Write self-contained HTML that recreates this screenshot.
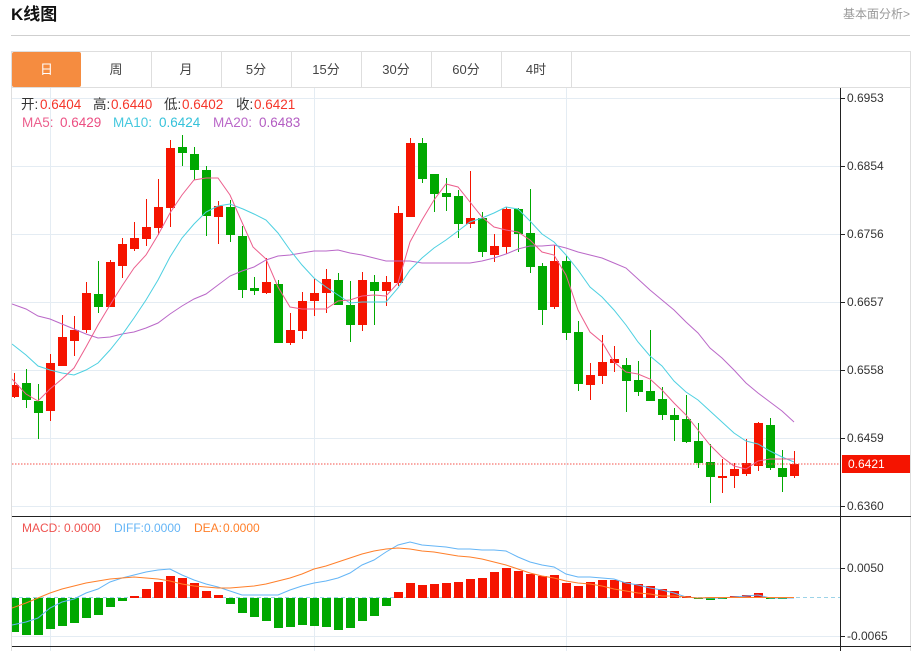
<!DOCTYPE html>
<html lang="zh">
<head>
<meta charset="utf-8">
<title>K线图</title>
<style>
html,body{margin:0;padding:0;background:#fff;width:914px;height:651px;overflow:hidden}
svg{display:block}
text{font-family:"Liberation Sans","Noto Sans CJK SC",sans-serif}
.tab{font-size:13px;fill:#444;text-anchor:middle}
.ax{font-size:12px;fill:#333}
.lg{font-size:13.5px}
.md{font-size:12px}
</style>
</head>
<body>
<svg width="914" height="651" viewBox="0 0 914 651" xmlns="http://www.w3.org/2000/svg">
<defs><clipPath id="c"><rect x="12" y="88" width="828" height="563"/></clipPath></defs>

<!-- header -->
<text x="11" y="20" font-size="17" font-weight="700" fill="#111">K线图</text>
<text x="843" y="18" font-size="12" fill="#999">基本面分析&gt;</text>
<rect x="11" y="35" width="899" height="1" fill="#cfcfcf"/>

<!-- frame -->
<g fill="#dedede" shape-rendering="crispEdges">
<rect x="11" y="51" width="900" height="1"/>
<rect x="11" y="87" width="900" height="1"/>
<rect x="11" y="51" width="1" height="600"/>
<rect x="910" y="51" width="1" height="600"/>
<rect x="151" y="52" width="1" height="35"/>
<rect x="221" y="52" width="1" height="35"/>
<rect x="291" y="52" width="1" height="35"/>
<rect x="361" y="52" width="1" height="35"/>
<rect x="431" y="52" width="1" height="35"/>
<rect x="501" y="52" width="1" height="35"/>
<rect x="571" y="52" width="1" height="35"/>
</g>
<rect x="12" y="52" width="69" height="35" rx="2" fill="#f58c40"/>
<text x="46.5" y="74" font-size="13" fill="#fff" text-anchor="middle">日</text>
<text class="tab" x="116" y="74">周</text>
<text class="tab" x="186" y="74">月</text>
<text class="tab" x="256" y="74">5分</text>
<text class="tab" x="326" y="74">15分</text>
<text class="tab" x="396" y="74">30分</text>
<text class="tab" x="466" y="74">60分</text>
<text class="tab" x="536" y="74">4时</text>

<!-- grid -->
<g fill="#e4ecf3" shape-rendering="crispEdges">
<rect x="12" y="98" width="828" height="1"/>
<rect x="12" y="166" width="828" height="1"/>
<rect x="12" y="234" width="828" height="1"/>
<rect x="12" y="302" width="828" height="1"/>
<rect x="12" y="370" width="828" height="1"/>
<rect x="12" y="438" width="828" height="1"/>
<rect x="12" y="506" width="828" height="1"/>
<rect x="12" y="568" width="828" height="1"/>
<rect x="12" y="636" width="828" height="1"/>
<rect x="50" y="88" width="1" height="563"/>
<rect x="314" y="88" width="1" height="563"/>
<rect x="566" y="88" width="1" height="563"/>
</g>

<g clip-path="url(#c)">
<!-- red candles -->
<path shape-rendering="crispEdges" fill="#f51400" d="M14 373h1v25h-1zM10 385h9v12h-9zM50 354h1v67h-1zM46 363h9v48h-9zM62 315h1v51h-1zM58 337h9v29h-9zM74 316h1v40h-1zM70 330h9v11h-9zM86 282h1v51h-1zM82 293h9v37h-9zM110 260h1v47h-1zM106 262h9v45h-9zM122 238h1v40h-1zM118 244h9v22h-9zM134 222h1v29h-1zM130 238h9v11h-9zM146 199h1v47h-1zM142 227h9v12h-9zM158 179h1v56h-1zM154 207h9v21h-9zM170 140h1v87h-1zM166 148h9v60h-9zM218 201h1v43h-1zM214 206h9v11h-9zM266 258h1v36h-1zM262 282h9v11h-9zM290 313h1v32h-1zM286 330h9v13h-9zM302 292h1v47h-1zM298 301h9v30h-9zM314 279h1v37h-1zM310 293h9v8h-9zM326 269h1v44h-1zM322 279h9v14h-9zM362 272h1v59h-1zM358 280h9v45h-9zM386 276h1v30h-1zM382 282h9v9h-9zM398 206h1v80h-1zM394 213h9v70h-9zM410 138h1v79h-1zM406 143h9v74h-9zM470 171h1v57h-1zM466 218h9v6h-9zM494 234h1v28h-1zM490 246h9v9h-9zM506 207h1v47h-1zM502 209h9v38h-9zM554 245h1v64h-1zM550 261h9v46h-9zM590 363h1v37h-1zM586 375h9v10h-9zM602 335h1v49h-1zM598 362h9v14h-9zM614 346h1v26h-1zM610 359h9v4h-9zM722 459h1v34h-1zM718 476h9v2h-9zM734 463h1v25h-1zM730 469h9v7h-9zM746 439h1v37h-1zM742 463h9v11h-9zM758 422h1v49h-1zM754 423h9v43h-9zM794 451h1v27h-1zM790 464h9v12h-9z"/>
<!-- green candles -->
<path shape-rendering="crispEdges" fill="#00a800" d="M26 369h1v39h-1zM22 383h9v17h-9zM38 384h1v55h-1zM34 401h9v12h-9zM98 261h1v52h-1zM94 294h9v13h-9zM182 135h1v31h-1zM178 147h9v6h-9zM194 147h1v33h-1zM190 154h9v16h-9zM206 166h1v70h-1zM202 170h9v46h-9zM230 200h1v42h-1zM226 207h9v28h-9zM242 226h1v72h-1zM238 236h9v54h-9zM254 277h1v18h-1zM250 288h9v3h-9zM278 280h1v63h-1zM274 284h9v59h-9zM338 273h1v32h-1zM334 280h9v25h-9zM350 281h1v61h-1zM346 305h9v20h-9zM374 275h1v50h-1zM370 282h9v9h-9zM422 138h1v45h-1zM418 143h9v36h-9zM434 174h1v38h-1zM430 174h9v20h-9zM446 178h1v33h-1zM442 193h9v4h-9zM458 190h1v48h-1zM454 196h9v28h-9zM482 212h1v45h-1zM478 218h9v34h-9zM518 208h1v44h-1zM514 209h9v25h-9zM530 189h1v84h-1zM526 233h9v34h-9zM542 263h1v62h-1zM538 266h9v44h-9zM566 256h1v84h-1zM562 261h9v72h-9zM578 321h1v70h-1zM574 332h9v52h-9zM626 358h1v54h-1zM622 365h9v16h-9zM638 361h1v35h-1zM634 380h9v12h-9zM650 330h1v71h-1zM646 391h9v10h-9zM662 387h1v33h-1zM658 399h9v16h-9zM674 408h1v33h-1zM670 415h9v5h-9zM686 395h1v48h-1zM682 419h9v23h-9zM698 423h1v45h-1zM694 441h9v22h-9zM710 444h1v59h-1zM706 462h9v15h-9zM770 418h1v52h-1zM766 425h9v43h-9zM782 450h1v42h-1zM778 468h9v9h-9z"/>

<!-- last price dotted line -->
<line x1="12" y1="464" x2="840" y2="464" stroke="#f5504a" stroke-width="1" stroke-dasharray="1.5 1.5"/>

<!-- MA lines -->
<polyline fill="none" stroke="#ba68c8" stroke-width="1" points="12,304 26,309 38,316 50,319 62,324 74,329 86,334 98,338 110,337 122,334 134,332 146,328 158,323 170,314 182,306 194,299 206,294 218,285 230,276 242,271 254,267 266,260 278,256 290,255 302,253 314,251 326,251 338,250 350,253 362,255 374,258 386,261 398,261 410,261 422,263 434,263 446,263 458,263 470,263 482,261 494,258 506,254 518,249 530,246 542,246 554,245 566,248 578,252 590,255 602,258 614,263 626,268 638,279 650,290 662,300 674,310 686,322 698,333 710,348 722,358 734,370 746,383 758,393 770,402 782,411 794,422"/>
<polyline fill="none" stroke="#4dd0e1" stroke-width="1" points="12,344 26,355 38,366 50,370 62,373 74,375 86,370 98,363 110,350 122,335 134,318 146,300 158,280 170,257 182,238 194,224 206,212 218,206 230,204 243,209 254,214 266,220 278,233 290,250 302,265 314,278 326,287 338,295 350,303 362,302 374,302 386,302 398,288 410,270 422,258 434,248 446,240 458,231 470,222 482,218 494,213 506,207 518,209 530,221 542,234 554,242 566,255 578,270 590,287 602,297 614,310 626,325 638,342 650,356 662,366 674,381 686,392 698,400 710,411 722,422 734,433 746,441 758,444 770,451 782,457 794,462"/>
<polyline fill="none" stroke="#ec5f8d" stroke-width="1" points="12,379 26,394 38,401 50,389 62,379 74,368 86,347 98,325 110,305 122,286 134,268 146,255 158,235 170,213 182,195 194,180 206,178 218,178 230,195 241,220 253,247 266,259 278,287 290,307 302,309 314,309 326,309 338,301 350,300 362,296 374,295 386,296 398,283 410,242 422,220 434,200 446,184 458,187 470,202 482,217 494,227 506,230 518,232 530,240 542,252 554,255 566,275 578,310 590,332 602,342 614,362 626,372 638,374 650,379 662,390 674,403 686,415 698,430 710,445 722,457 734,466 746,469 758,461 770,459 782,459 794,459"/>

<!-- MACD baseline -->
<line x1="12" y1="597.5" x2="840" y2="597.5" stroke="#9cd3e8" stroke-width="1" stroke-dasharray="4 3"/>
<!-- MACD bars -->
<path shape-rendering="crispEdges" fill="#f51400" d="M130 596h9v2h-9zM142 589h9v9h-9zM154 582h9v16h-9zM166 576h9v22h-9zM178 578h9v20h-9zM190 583h9v15h-9zM202 591h9v7h-9zM214 595h9v3h-9zM394 592h9v6h-9zM406 583h9v15h-9zM418 585h9v13h-9zM430 584h9v14h-9zM442 583h9v15h-9zM454 582h9v16h-9zM466 579h9v19h-9zM478 578h9v20h-9zM490 572h9v26h-9zM502 568h9v30h-9zM514 571h9v27h-9zM526 574h9v24h-9zM538 576h9v22h-9zM550 575h9v23h-9zM562 583h9v15h-9zM574 586h9v12h-9zM586 582h9v16h-9zM598 580h9v18h-9zM610 580h9v18h-9zM622 582h9v16h-9zM634 584h9v14h-9zM646 586h9v12h-9zM658 589h9v9h-9zM670 591h9v7h-9zM682 596h9v2h-9zM730 596h9v2h-9zM742 595h9v3h-9zM754 593h9v5h-9z"/>
<path shape-rendering="crispEdges" fill="#00a800" d="M10 598h9v34h-9zM22 598h9v37h-9zM34 598h9v37h-9zM46 598h9v31h-9zM58 598h9v28h-9zM70 598h9v25h-9zM82 598h9v20h-9zM94 598h9v17h-9zM106 598h9v9h-9zM118 598h9v3h-9zM226 598h9v6h-9zM238 598h9v15h-9zM250 598h9v19h-9zM262 598h9v23h-9zM274 598h9v30h-9zM286 598h9v29h-9zM298 598h9v27h-9zM310 598h9v28h-9zM322 598h9v29h-9zM334 598h9v32h-9zM346 598h9v30h-9zM358 598h9v23h-9zM370 598h9v18h-9zM382 598h9v8h-9zM694 598h9v1h-9zM706 598h9v2h-9zM718 598h9v1h-9zM766 598h9v1h-9zM778 598h9v1h-9z"/>
<!-- DIFF / DEA -->
<polyline fill="none" stroke="#64b5f6" stroke-width="1" points="12,625 26,622 38,618 50,608 62,602 74,599 86,593 98,589 110,582 122,578 134,575 146,572 158,570 170,569 182,575 194,580 206,584 218,587 230,591 242,595 254,595 266,595 278,595 290,590 302,586 314,583 326,581 338,578 350,573 362,565 374,560 386,552 398,545 410,542 422,545 434,546 446,547 458,549 470,549 482,550 494,550 506,551 518,557 530,562 542,565 554,567 566,574 578,577 590,577 602,578 614,579 626,583 638,585 650,588 662,590 674,593 686,597 698,598 710,598 722,598 734,597 746,596 758,595 770,598 782,598 794,598"/>
<polyline fill="none" stroke="#ff7f2a" stroke-width="1" points="12,608 26,603 38,598 50,593 62,589 74,586 86,583 98,581 110,579 122,578 134,577 146,578 158,579 170,581 182,584 194,586 206,587 218,588 230,588 242,587 254,586 266,584 278,581 290,578 302,574 314,569 326,566 338,562 350,558 362,554 374,551 386,549 398,548 410,549 422,551 434,552 446,554 458,556 470,557 482,559 494,562 506,565 518,569 530,573 542,576 554,578 566,581 578,583 590,584 602,586 614,589 626,591 638,593 650,594 662,596 674,596 686,597 698,598 710,597.5 722,597.5 734,597.5 746,597.5 758,597.5 770,597.5 782,597.5 794,597.5"/>
</g>

<!-- axes -->
<g fill="#222" shape-rendering="crispEdges">
<rect x="840" y="88" width="1" height="563"/>
<rect x="12" y="516" width="899" height="1"/>
<rect x="12" y="646" width="899" height="1"/>
<rect x="841" y="98" width="4" height="1"/>
<rect x="841" y="166" width="4" height="1"/>
<rect x="841" y="234" width="4" height="1"/>
<rect x="841" y="302" width="4" height="1"/>
<rect x="841" y="370" width="4" height="1"/>
<rect x="841" y="438" width="4" height="1"/>
<rect x="841" y="506" width="4" height="1"/>
<rect x="841" y="568" width="4" height="1"/>
<rect x="841" y="636" width="4" height="1"/>
</g>
<text class="ax" x="847" y="102">0.6953</text>
<text class="ax" x="847" y="170">0.6854</text>
<text class="ax" x="847" y="238">0.6756</text>
<text class="ax" x="847" y="306">0.6657</text>
<text class="ax" x="847" y="374">0.6558</text>
<text class="ax" x="847" y="442">0.6459</text>
<text class="ax" x="847" y="510">0.6360</text>
<text class="ax" x="847" y="572">0.0050</text>
<text class="ax" x="847" y="640">-0.0065</text>
<rect x="842" y="455" width="68" height="18" fill="#f51400"/>
<text x="848" y="468" font-size="12" fill="#fff">0.6421</text>

<!-- legends -->
<text class="lg" x="21" y="109" fill="#333">开:</text><text class="lg" x="40" y="109" fill="#f5362a">0.6404</text>
<text class="lg" x="93" y="109" fill="#333">高:</text><text class="lg" x="111" y="109" fill="#f5362a">0.6440</text>
<text class="lg" x="164" y="109" fill="#333">低:</text><text class="lg" x="182" y="109" fill="#f5362a">0.6402</text>
<text class="lg" x="236" y="109" fill="#333">收:</text><text class="lg" x="254" y="109" fill="#f5362a">0.6421</text>
<text class="lg" x="22" y="127" fill="#ec5f8d">MA5:</text><text class="lg" x="60" y="127" fill="#ec4f82">0.6429</text>
<text class="lg" x="113" y="127" fill="#45c8de">MA10:</text><text class="lg" x="159" y="127" fill="#35c2da">0.6424</text>
<text class="lg" x="213" y="127" fill="#ba68c8">MA20:</text><text class="lg" x="259" y="127" fill="#b35cc2">0.6483</text>
<text class="md" x="22" y="532" fill="#ef5350">MACD:</text><text class="md" x="64" y="532" fill="#ef5350">0.0000</text>
<text class="md" x="114" y="532" fill="#64b5f6">DIFF:</text><text class="md" x="144" y="532" fill="#64b5f6">0.0000</text>
<text class="md" x="194" y="532" fill="#ff7f2a">DEA:</text><text class="md" x="223" y="532" fill="#ff7f2a">0.0000</text>
</svg>
</body>
</html>
